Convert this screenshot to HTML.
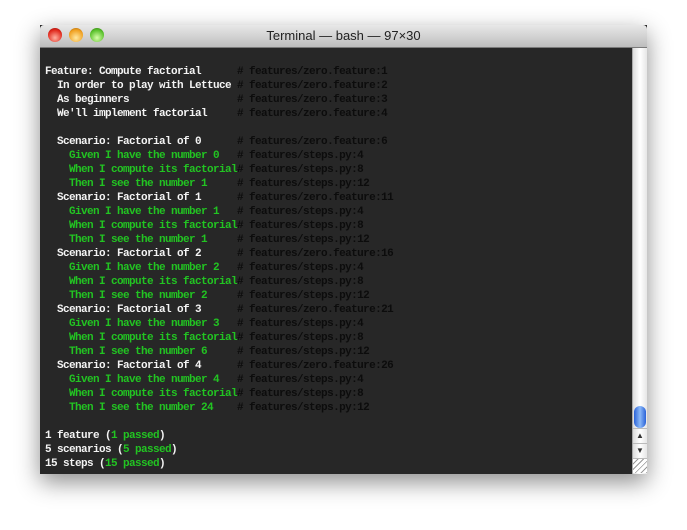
<!DOCTYPE html>
<html><head><meta charset="utf-8"><style>
html,body{margin:0;padding:0;width:687px;height:530px;background:#fff;overflow:hidden}
.win{position:absolute;left:40px;top:25px;width:607px;height:449px;box-shadow:0 8px 22px rgba(0,0,0,.45);background:#272727}
.title{position:absolute;left:0;top:0;width:607px;height:22px;background:linear-gradient(#e8e8e8,#bdbdbd);border-bottom:1px solid #7a7a7a;border-radius:4px 4px 0 0}
.title span{position:absolute;left:0;right:0;top:3px;text-align:center;font:13px "Liberation Sans",sans-serif;color:#222}
.b{position:absolute;top:3px;width:14px;height:14px;border-radius:50%}
.term{position:absolute;left:0;top:23px;width:592px;height:426px;background:#272727}
pre{position:absolute;left:5px;top:17px;margin:0;font:bold 11px/14px "Liberation Mono",monospace;letter-spacing:-0.6px;color:#f4f4f4;white-space:pre}
.g{color:#22c422}.c{color:#0c0c0c}
.sb{position:absolute;left:592px;top:23px;width:15px;height:426px;background:linear-gradient(90deg,#dcdcdc,#fff 50%,#e6e6e6);border-left:1px solid #aaa;box-sizing:border-box}
.thumb{position:absolute;left:1px;top:358px;width:12px;height:22px;border-radius:6px;background:linear-gradient(90deg,#2a62d8,#8ab8f8,#2a62d8)}
.ar{position:absolute;left:0;width:14px;height:14px;font-size:8px;text-align:center;line-height:14px;color:#333;border-top:1px solid #bbb}
</style></head><body>
<div class="win">
<div class="title">
<div class="b" style="left:8px;background:radial-gradient(circle at 50% 70%,#ffb0a0,#e0281c 65%,#8a1010)"></div>
<div class="b" style="left:29px;background:radial-gradient(circle at 50% 70%,#ffe8a0,#f0a020 65%,#9a5a08)"></div>
<div class="b" style="left:50px;background:radial-gradient(circle at 50% 70%,#d8ffaa,#58c02a 65%,#2a6a10)"></div>
<span>Terminal — bash — 97×30</span></div>
<div class="term"><pre>Feature: Compute factorial      <span class="c"># features/zero.feature:1</span>
  In order to play with Lettuce <span class="c"># features/zero.feature:2</span>
  As beginners                  <span class="c"># features/zero.feature:3</span>
  We'll implement factorial     <span class="c"># features/zero.feature:4</span>

  Scenario: Factorial of 0      <span class="c"># features/zero.feature:6</span>
<span class="g">    Given I have the number 0   </span><span class="c"># features/steps.py:4</span>
<span class="g">    When I compute its factorial</span><span class="c"># features/steps.py:8</span>
<span class="g">    Then I see the number 1     </span><span class="c"># features/steps.py:12</span>
  Scenario: Factorial of 1      <span class="c"># features/zero.feature:11</span>
<span class="g">    Given I have the number 1   </span><span class="c"># features/steps.py:4</span>
<span class="g">    When I compute its factorial</span><span class="c"># features/steps.py:8</span>
<span class="g">    Then I see the number 1     </span><span class="c"># features/steps.py:12</span>
  Scenario: Factorial of 2      <span class="c"># features/zero.feature:16</span>
<span class="g">    Given I have the number 2   </span><span class="c"># features/steps.py:4</span>
<span class="g">    When I compute its factorial</span><span class="c"># features/steps.py:8</span>
<span class="g">    Then I see the number 2     </span><span class="c"># features/steps.py:12</span>
  Scenario: Factorial of 3      <span class="c"># features/zero.feature:21</span>
<span class="g">    Given I have the number 3   </span><span class="c"># features/steps.py:4</span>
<span class="g">    When I compute its factorial</span><span class="c"># features/steps.py:8</span>
<span class="g">    Then I see the number 6     </span><span class="c"># features/steps.py:12</span>
  Scenario: Factorial of 4      <span class="c"># features/zero.feature:26</span>
<span class="g">    Given I have the number 4   </span><span class="c"># features/steps.py:4</span>
<span class="g">    When I compute its factorial</span><span class="c"># features/steps.py:8</span>
<span class="g">    Then I see the number 24    </span><span class="c"># features/steps.py:12</span>

1 feature (<span class="g">1 passed</span>)
5 scenarios (<span class="g">5 passed</span>)
15 steps (<span class="g">15 passed</span>)</pre></div>
<div class="sb"><div class="thumb"></div>
<div class="ar" style="top:380px">▲</div>
<div class="ar" style="top:395px">▼</div>
<div class="ar" style="top:410px;background:repeating-linear-gradient(135deg,#fff 0 3px,#999 3px 4px)"></div>
</div>
</div>
</body></html>
